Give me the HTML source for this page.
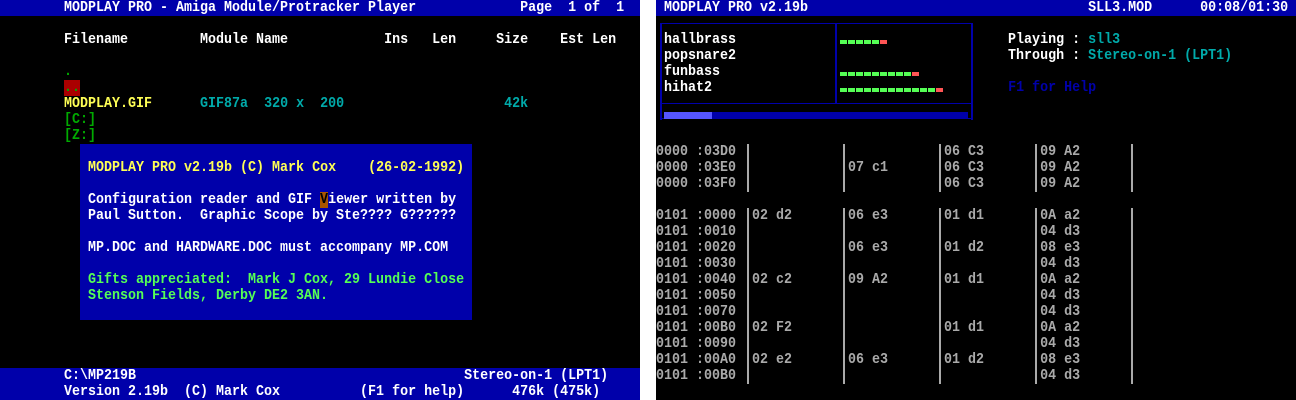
<!DOCTYPE html>
<html><head><meta charset="utf-8"><style>
html,body{margin:0;padding:0;background:#fff;width:1296px;height:400px;overflow:hidden}
#l,#r{position:absolute;top:0;width:640px;height:400px;background:#000;overflow:hidden}
#l{left:0}#r{left:656px}
.b{position:absolute;background:#0000aa}
pre{position:absolute;left:0;top:0;margin:0;font:bold 15px/16px "Liberation Mono",monospace;color:#fff;white-space:pre;transform:scaleX(.88889);transform-origin:0 0}
.c{color:#00aaaa}.g{color:#00aa00}.y{color:#ffff55}.n{color:#55ff55}.u{color:#0000aa}
.a{color:#aaa}.k{color:#000}
.v{position:absolute;width:2px;background:#aaa}
.s{position:absolute;height:4px;left:184px;background:repeating-linear-gradient(90deg,#55ff55 0,#55ff55 7px,transparent 7px,transparent 8px)}
.t{position:absolute;height:4px;width:7px;background:#ff5555}
</style></head><body>
<div id="l">
<div class="b" style="left:0;top:0;width:640px;height:16px"></div>
<div class="b" style="left:80px;top:144px;width:392px;height:176px"></div>
<div class="b" style="left:0;top:368px;width:640px;height:32px"></div>
<div style="position:absolute;left:64px;top:80px;width:16px;height:16px;background:#aa0000"></div>
<div style="position:absolute;left:320px;top:192px;width:8px;height:16px;background:#aa5500"></div>
<pre>        MODPLAY PRO - Amiga Module/Protracker Player             Page  1 of  1

        Filename         Module Name            Ins   Len     Size    Est Len

<span class="g">        .
        ..</span>
        <span class="y">MODPLAY.GIF</span>      <span class="c">GIF87a  320 x  200</span>                    <span class="c">42k</span>
<span class="g">        [C:]
        [Z:]</span>

           <span class="y">MODPLAY PRO v2.19b (C) Mark Cox    (26-02-1992)</span>

           Configuration reader and GIF <span class="k">V</span>iewer written by
           Paul Sutton.  Graphic Scope by Ste???? G??????

           MP.DOC and HARDWARE.DOC must accompany MP.COM

<span class="n">           Gifts appreciated:  Mark J Cox, 29 Lundie Close
           Stenson Fields, Derby DE2 3AN.</span>




        C:\MP219B                                         Stereo-on-1 (LPT1)
        Version 2.19b  (C) Mark Cox          (F1 for help)      476k (475k)</pre>
</div>
<div id="r">
<div class="b" style="left:0;top:0;width:640px;height:16px"></div>
<div class="b" style="left:4px;top:23px;width:313px;height:1px"></div>
<div class="b" style="left:4px;top:103px;width:313px;height:1px"></div>
<div class="b" style="left:4px;top:118px;width:313px;height:1px"></div>
<div class="b" style="left:4px;top:23px;width:2px;height:97px"></div>
<div class="b" style="left:315px;top:23px;width:2px;height:97px"></div>
<div class="b" style="left:179px;top:23px;width:2px;height:80px"></div>
<div class="b" style="left:8px;top:112px;width:304px;height:7px"></div>
<div style="position:absolute;left:8px;top:112px;width:48px;height:7px;background:#5555ff"></div>
<div class="s" style="top:40px;width:40px"></div><div class="t" style="left:224px;top:40px"></div>
<div class="s" style="top:72px;width:72px"></div><div class="t" style="left:256px;top:72px"></div>
<div class="s" style="top:88px;width:96px"></div><div class="t" style="left:280px;top:88px"></div>
<div class="v" style="left:91px;top:144px;height:48px"></div>
<div class="v" style="left:187px;top:144px;height:48px"></div>
<div class="v" style="left:283px;top:144px;height:48px"></div>
<div class="v" style="left:379px;top:144px;height:48px"></div>
<div class="v" style="left:475px;top:144px;height:48px"></div>
<div class="v" style="left:91px;top:208px;height:176px"></div>
<div class="v" style="left:187px;top:208px;height:176px"></div>
<div class="v" style="left:283px;top:208px;height:176px"></div>
<div class="v" style="left:379px;top:208px;height:176px"></div>
<div class="v" style="left:475px;top:208px;height:176px"></div>
<pre> MODPLAY PRO v2.19b                                   SLL3.MOD      00:08/01:30

 hallbrass                                  Playing : <span class="c">sll3</span>
 popsnare2                                  Through : <span class="c">Stereo-on-1 (LPT1)</span>
 funbass
 hihat2                                     <span class="u">F1 for Help</span>



<span class="a">0000 :03D0                          06 C3       09 A2
0000 :03E0              07 c1       06 C3       09 A2
0000 :03F0                          06 C3       09 A2

0101 :0000  02 d2       06 e3       01 d1       0A a2
0101 :0010                                      04 d3
0101 :0020              06 e3       01 d2       08 e3
0101 :0030                                      04 d3
0101 :0040  02 c2       09 A2       01 d1       0A a2
0101 :0050                                      04 d3
0101 :0070                                      04 d3
0101 :00B0  02 F2                   01 d1       0A a2
0101 :0090                                      04 d3
0101 :00A0  02 e2       06 e3       01 d2       08 e3
0101 :00B0                                      04 d3</span></pre>
</div>
</body></html>
